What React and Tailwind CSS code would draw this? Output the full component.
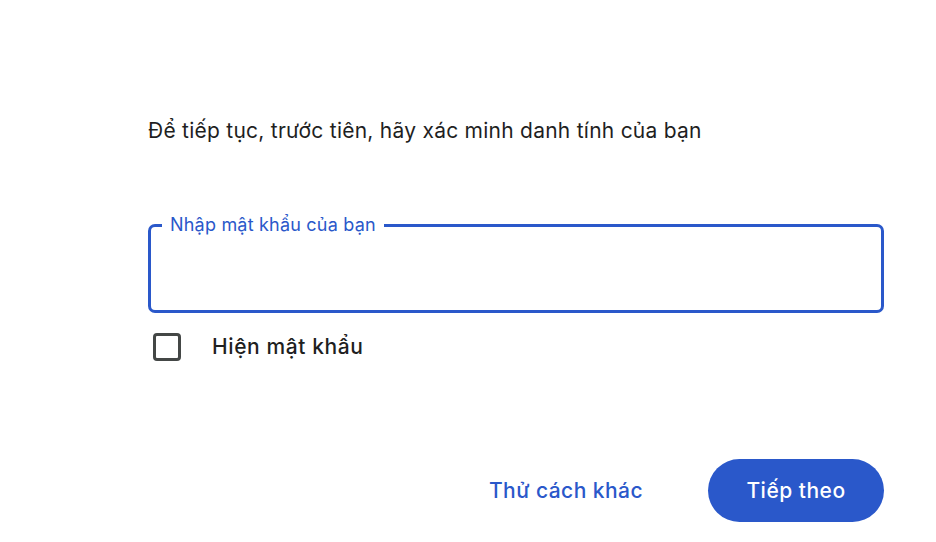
export default function App() {
  return (
    <div className="w-[936px] h-[542px] bg-white font-['Inter','Noto_Sans',sans-serif] text-[#1f1f1f]">
      <div className="pl-[148px] pt-[117px] w-[884px]">
        <h1 className="text-[21px] leading-[28px] font-normal tracking-[0.25px]">
          Để tiếp tục, trước tiên, hãy xác minh danh tính của bạn
        </h1>

        {/* Password field */}
        <div className="relative mt-[79px] h-[89px] border-[3px] border-[#2a58ca] rounded-[7px]">
          <label className="absolute -top-[12px] left-[11px] px-[8px] bg-white text-[18px] leading-[20px] tracking-[0.2px] text-[#2a58ca]">
            Nhập mật khẩu của bạn
          </label>
          <input type="password" className="w-full h-full px-4 outline-none bg-transparent text-[18px]" />
        </div>

        {/* Show password */}
        <div className="flex items-center mt-[20px] h-[28px]">
          <div className="ml-[5px] w-[28px] h-[28px] border-[3px] border-[#444746] rounded-[4px]" />
          <span className="ml-[31px] text-[21px] font-medium tracking-[0.6px] text-[#1f1f1f]">Hiện mật khẩu</span>
        </div>

        {/* Actions */}
        <div className="flex justify-end items-center mt-[98px] gap-[65px]">
          <button type="button" className="text-[21px] font-medium tracking-[0.45px] text-[#2a58ca]">
            Thử cách khác
          </button>
          <button type="button" className="w-[176px] h-[63px] rounded-full bg-[#2a58ca] text-white text-[21px] font-medium tracking-[0.5px]">
            Tiếp theo
          </button>
        </div>
      </div>
    </div>
  )
}
